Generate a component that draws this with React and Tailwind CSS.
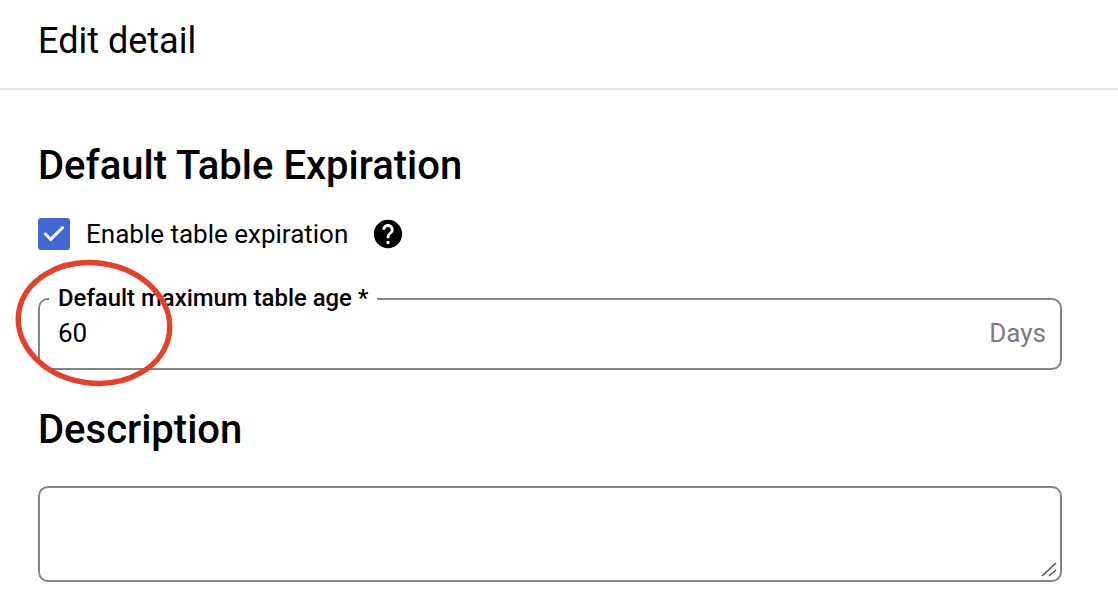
import { Check } from "lucide-react";

export default function App() {
  return (
    <div className="relative h-[614px] w-[1118px] overflow-hidden bg-white font-['Roboto',sans-serif] text-black">
      <header className="flex h-[90px] items-center border-b-2 border-[#e2e2e2] pb-[6px] pl-[38px]">
        <h1 className="text-[36px] leading-none">Edit detail</h1>
      </header>

      <div className="w-[1062px] pl-[38px] pt-[54px]">
        <h2 className="text-[40px] font-medium leading-[44px]">Default Table Expiration</h2>

        <div className="mt-[30px] flex h-[32px] items-center">
          <span className="flex h-[32px] w-[32px] items-center justify-center rounded-[3px] bg-[#4268d6]">
            <Check size={26} strokeWidth={2.8} className="text-white" />
          </span>
          <span className="ml-[16px] text-[26px] leading-none">Enable table expiration</span>
          <svg viewBox="0 0 24 24" className="ml-[23px] h-[34px] w-[34px]">
            <path
              fill="#000"
              d="M12 2C6.48 2 2 6.48 2 12s4.48 10 10 10 10-4.48 10-10S17.52 2 12 2zm1 17h-2v-2h2v2zm2.07-7.75l-.9.92C13.45 12.9 13 13.5 13 15h-2v-.5c0-1.1.45-2.1 1.17-2.83l1.24-1.26c.37-.36.59-.86.59-1.41 0-1.1-.9-2-2-2s-2 .9-2 2H8c0-2.21 1.79-4 4-4s4 1.79 4 4c0 .88-.36 1.68-.93 2.25z"
            />
          </svg>
        </div>

        <div className="relative mt-[48px] flex h-[72px] items-end justify-between rounded-[10px] border-2 border-[#858585] pb-[21px] pl-[18px] pr-[14px]">
          <span className="absolute left-[9px] top-[-15px] bg-white px-[9px] text-[23.9px] font-medium leading-[26px]">
            Default maximum table age *
          </span>
          <span className="text-[26px] leading-[28px]">60</span>
          <span className="text-[26px] leading-[28px] text-[#7c7c7c]">Days</span>
        </div>

        <h2 className="mt-[38px] text-[40px] font-medium leading-[44px]">Description</h2>

        <div className="relative mt-[34px] h-[96px] rounded-[10px] border-2 border-[#858585]">
          <svg viewBox="0 0 18 18" className="absolute bottom-[2px] right-[2px] h-[18px] w-[18px]">
            <path d="M2 16 L16 3 M9 16 L16 10" stroke="#555" strokeWidth="1.6" fill="none" />
          </svg>
        </div>
      </div>

      <svg viewBox="0 0 1118 614" className="pointer-events-none absolute left-0 top-0 h-[614px] w-[1118px]">
        <ellipse cx="94" cy="323" rx="76" ry="60" transform="rotate(8 94 323)" fill="none" stroke="#e3412b" strokeWidth="5.5" />
      </svg>
    </div>
  );
}
